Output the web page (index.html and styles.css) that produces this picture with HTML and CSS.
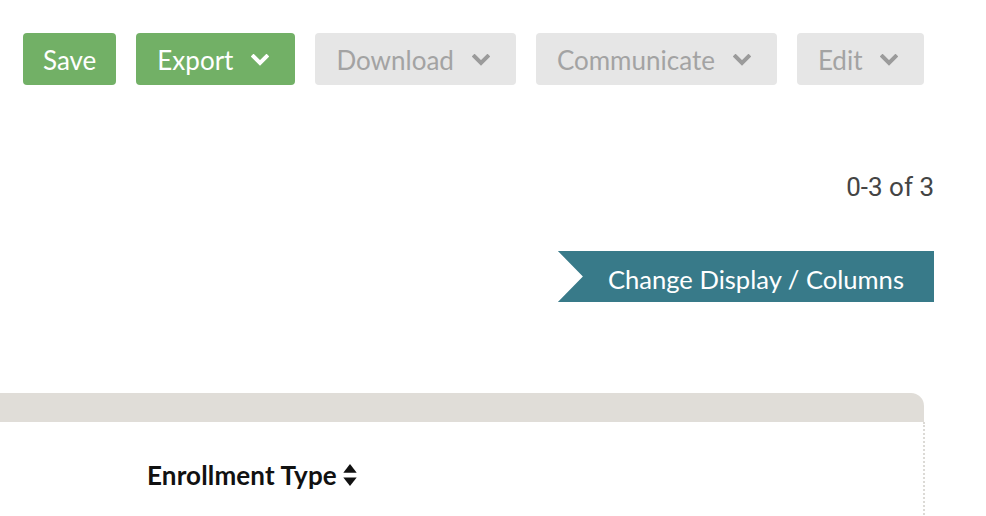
FILE: index.html
```html
<!DOCTYPE html>
<html>
<head>
<meta charset="utf-8">
<link rel="stylesheet" href="styles.css">
</head>
<body>
<div class="toolbar">
  <button class="btn btn-green btn-plain">Save</button>
  <button class="btn btn-green">Export <svg class="chev" viewBox="0 0 18 12"><polyline points="2.5,2.5 9,9 15.5,2.5"/></svg></button>
  <button class="btn btn-grey">Download <svg class="chev" viewBox="0 0 18 12"><polyline points="2.5,2.5 9,9 15.5,2.5"/></svg></button>
  <button class="btn btn-grey">Communicate <svg class="chev" viewBox="0 0 18 12"><polyline points="2.5,2.5 9,9 15.5,2.5"/></svg></button>
  <button class="btn btn-grey">Edit <svg class="chev" viewBox="0 0 18 12"><polyline points="2.5,2.5 9,9 15.5,2.5"/></svg></button>
</div>
<div class="pager">0-3 of 3</div>
<div class="display-row">
  <div class="ribbon">Change Display / Columns</div>
</div>
<div class="table">
  <div class="table-head"></div>
  <div class="table-body">
    <div class="col-title">Enrollment Type<svg class="sort" viewBox="0 0 14 24"><polygon points="7,0 14,9 0,9"/><polygon points="0,14 14,14 7,23"/></svg></div>
  </div>
</div>
</body>
</html>
```
FILE: styles.css
```css
html, body {
  margin: 0;
  padding: 0;
  background: #ffffff;
  overflow: hidden;
}
body {
  font-family: Lato, "Open Sans", sans-serif;
  width: 986px;
  height: 516px;
}
.toolbar {
  display: flex;
  gap: 20px;
  padding: 33px 0 0 23px;
}
.btn {
  height: 52px;
  border: none;
  border-radius: 4px;
  font-family: Lato, sans-serif;
  font-size: 26px;
  padding: 1px 26px 0 21px;
  display: flex;
  align-items: center;
  gap: 18px;
  cursor: pointer;
}
.btn-plain {
  padding: 1px 20px 0 20px;
}
.btn-green {
  background: #72b066;
  color: #ffffff;
}
.btn-grey {
  background: #e6e6e6;
  color: #a3a3a3;
}
.chev {
  width: 18px;
  height: 12px;
  fill: none;
  stroke: currentColor;
  stroke-width: 4;
  stroke-linecap: square;
  stroke-linejoin: miter;
}
.btn-grey .chev {
  stroke: #9b9b9b;
}
.pager {
  font-family: Roboto, sans-serif;
  font-size: 26px;
  color: #444444;
  text-align: right;
  width: 934px;
  margin-top: 87px;
  line-height: 30px;
}
.display-row {
  display: flex;
  justify-content: flex-end;
  width: 934px;
  margin-top: 49px;
}
.ribbon {
  background: #387a89;
  color: #ffffff;
  font-size: 25.6px;
  height: 48px;
  line-height: 51px;
  padding: 3px 30px 0 50px;
  clip-path: polygon(0 0, 100% 0, 100% 100%, 0 100%, 25px 50%);
}
.table {
  width: 925px;
  margin-top: 91px;
}
.table-head {
  height: 29px;
  background: #e0ddd8;
  border-top-right-radius: 13px;
  width: 924px;
}
.table-body {
  border-right: 2px dotted #dcdad6;
  width: 923px;
  height: 100px;
  padding-top: 37px;
}
.col-title {
  margin-left: 147px;
  font-weight: 700;
  font-size: 26px;
  color: #111111;
  display: flex;
  align-items: center;
  gap: 6px;
  letter-spacing: 0.15px;
}
.sort {
  width: 14px;
  height: 23px;
  fill: #111111;
}
```
